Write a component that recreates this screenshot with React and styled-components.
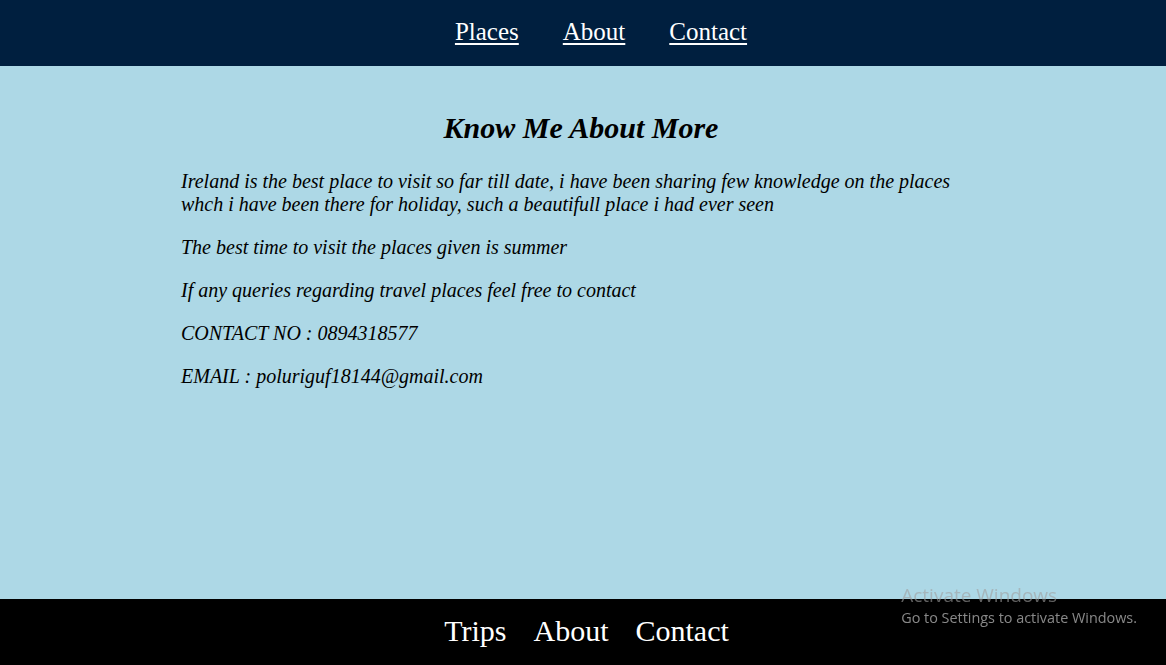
import React from "react";
import styled, { createGlobalStyle } from "styled-components";

const Global = createGlobalStyle`
  html, body { margin: 0; padding: 0; }
  body {
    font-family: "Liberation Serif", "Times New Roman", serif;
    background: #add8e6;
  }
`;

const Page = styled.div`
  min-height: 100vh;
  display: flex;
  flex-direction: column;
`;

const TopNav = styled.nav`
  height: 66px;
  background: #001f3f;
  display: flex;
  align-items: center;
  justify-content: center;
  padding-left: 36px;
  box-sizing: border-box;
`;

const NavList = styled.ul`
  display: flex;
  gap: 44px;
  list-style: none;
  margin: 0;
  padding: 0 0 3px;
`;

const NavLink = styled.a`
  color: #fff;
  font-size: 25px;
  text-decoration: underline;
  text-underline-offset: 3px;
`;

const Main = styled.main`
  flex: 1;
  padding: 0 181px;
`;

const Title = styled.h2`
  margin: 45px 0 0;
  padding-right: 4px;
  font-size: 30px;
  font-style: italic;
  font-weight: bold;
  text-align: center;
  line-height: 34px;
`;

const Para = styled.p`
  font-size: 20px;
  font-style: italic;
  margin: 20px 0 0;
  line-height: 23px;
  color: #000;
  &:first-of-type { margin-top: 25px; }
`;

const Footer = styled.footer`
  height: 66px;
  background: #000;
  display: flex;
  align-items: center;
  justify-content: center;
  gap: 27px;
  padding-left: 7px;
`;

const FootLink = styled.a`
  color: #fff;
  font-size: 30px;
  text-decoration: none;
  padding-bottom: 3px;
`;

const Watermark = styled.div`
  position: fixed;
  right: 29px;
  bottom: 37px;
  font-family: "Open Sans", "Noto Sans", sans-serif;
  color: rgba(160, 160, 160, 0.85);
  pointer-events: none;
`;

const WmTitle = styled.div`
  font-size: 19px;
  line-height: 22px;
  opacity: 0.7;
`;

const WmSub = styled.div`
  font-size: 14.4px;
  line-height: 20px;
  margin-top: 2px;
`;

export default function App() {
  return (
    <>
      <Global />
      <Page>
        <TopNav>
          <NavList>
            <li><NavLink href="#">Places</NavLink></li>
            <li><NavLink href="#">About</NavLink></li>
            <li><NavLink href="#">Contact</NavLink></li>
          </NavList>
        </TopNav>
        <Main>
          <Title>Know Me About More</Title>
          <Para>
            Ireland is the best place to visit so far till date, i have been sharing few knowledge on the places whch i have been there for holiday, such a beautifull place i had ever seen
          </Para>
          <Para>The best time to visit the places given is summer</Para>
          <Para>If any queries regarding travel places feel free to contact</Para>
          <Para>CONTACT NO : 0894318577</Para>
          <Para>EMAIL : poluriguf18144@gmail.com</Para>
        </Main>
        <Footer>
          <FootLink href="#">Trips</FootLink>
          <FootLink href="#">About</FootLink>
          <FootLink href="#">Contact</FootLink>
        </Footer>
      </Page>
      <Watermark>
        <WmTitle>Activate Windows</WmTitle>
        <WmSub>Go to Settings to activate Windows.</WmSub>
      </Watermark>
    </>
  );
}
